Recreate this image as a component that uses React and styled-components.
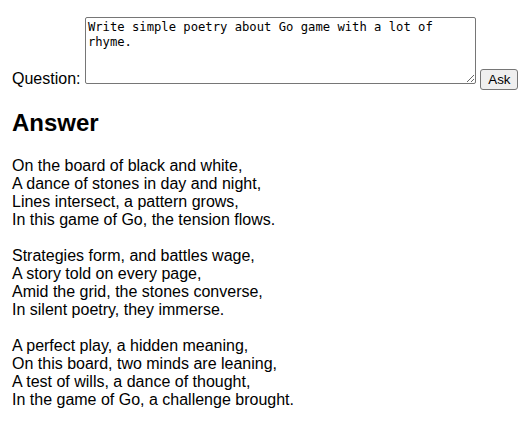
import React from "react";
import styled, { createGlobalStyle } from "styled-components";

const Global = createGlobalStyle`
  body {
    margin: 0;
    padding: 0 12px;
    font-family: "Liberation Sans", Arial, sans-serif;
    font-size: 16px;
    color: #000;
    background: #fff;
  }
`;

const Form = styled.div`
  padding-top: 17px;
  white-space: nowrap;
`;

const Label = styled.label`
  font-size: 16px;
`;

const QuestionBox = styled.textarea`
  box-sizing: border-box;
  width: 391px;
  height: 67px;
  margin: 0;
  padding: 2px;
  border: 1px solid #767676;
  border-radius: 2px;
  font-family: "DejaVu Sans Mono", "Liberation Mono", monospace;
  font-size: 12.2px;
  line-height: 15px;
  color: #000;
  vertical-align: baseline;
  white-space: pre-wrap;
`;

const AskButton = styled.button`
  font-family: "Liberation Sans", Arial, sans-serif;
  font-size: 13.33px;
  padding: 2px 6px;
  min-width: 38px;
  border: 1px solid #767676;
  border-radius: 3px;
  background: #efefef;
  color: #000;
  margin: 0;
`;

const Heading = styled.h2`
  font-size: 24px;
  font-weight: bold;
  margin: 18.9px 0 19.92px;
`;

const Poem = styled.div`
  white-space: pre-line;
  line-height: normal;
`;

const poem = `On the board of black and white,
A dance of stones in day and night,
Lines intersect, a pattern grows,
In this game of Go, the tension flows.

Strategies form, and battles wage,
A story told on every page,
Amid the grid, the stones converse,
In silent poetry, they immerse.

A perfect play, a hidden meaning,
On this board, two minds are leaning,
A test of wills, a dance of thought,
In the game of Go, a challenge brought.`;

export default function App() {
  return (
    <>
      <Global />
      <Form>
        <Label htmlFor="q">Question:</Label>{" "}
        <QuestionBox
          id="q"
          defaultValue="Write simple poetry about Go game with a lot of rhyme."
        />{" "}
        <AskButton>Ask</AskButton>
      </Form>
      <Heading>Answer</Heading>
      <Poem>{poem}</Poem>
    </>
  );
}
